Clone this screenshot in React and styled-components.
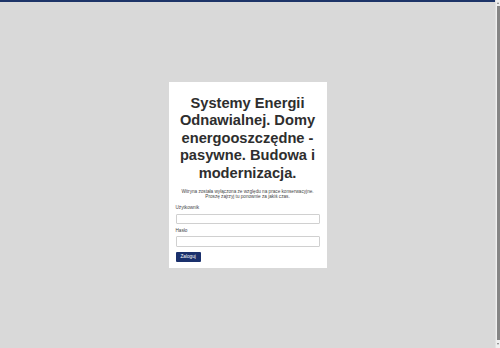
import React from "react";
import styled, { createGlobalStyle } from "styled-components";

const GlobalStyle = createGlobalStyle`
  html, body {
    overflow: hidden;
  }
  body {
    margin: 0;
    background: #d9d9d9;
    font-family: "Liberation Sans", Arial, sans-serif;
    color: #333;
  }
`;

const Page = styled.div`
  min-height: 100vh;
  box-sizing: border-box;
  border-top: 2px solid #1d3468;
  padding-right: 5px;
  display: flex;
  align-items: center;
  justify-content: center;
`;

const ScrollTrack = styled.div`
  position: fixed;
  top: 0;
  right: 0;
  width: 5px;
  height: 100vh;
  background: #efefef;
  border-left: 1px solid #e2e2e2;
  box-sizing: border-box;
`;

const ScrollThumb = styled.div`
  position: absolute;
  top: 6px;
  bottom: 8px;
  left: 0.5px;
  right: 0.5px;
  background: #858585;
`;

const ScrollArrow = styled.div`
  position: absolute;
  left: 1px;
  ${(p) => (p.$down ? "bottom: 3px;" : "top: 2px;")}
  width: 0;
  height: 0;
  border-left: 1.5px solid transparent;
  border-right: 1.5px solid transparent;
  ${(p) =>
    p.$down ? "border-top: 2px solid #7a7a7a;" : "border-bottom: 2px solid #7a7a7a;"}
`;

const Card = styled.section`
  width: 158px;
  box-sizing: border-box;
  background: #fff;
  padding: 13px 7px 6px;
`;

const Title = styled.h1`
  margin: 0;
  font-size: 14.67px;
  line-height: 1.2;
  font-weight: 700;
  text-align: center;
  color: #2e2e2e;
`;

const Notice = styled.p`
  margin: 6px 0 0;
  font-size: 4.67px;
  line-height: 1.25;
  text-align: center;
  color: #444;
`;

const Form = styled.form`
  display: flex;
  flex-direction: column;
  margin-top: 5px;
`;

const Label = styled.label`
  font-size: 4.67px;
  line-height: 1.2;
  color: #444;
  margin-top: ${(p) => (p.$first ? "0" : "3.5px")};
`;

const Input = styled.input`
  display: block;
  box-sizing: border-box;
  width: 100%;
  height: 10.5px;
  margin: 3px 0 0;
  padding: 0 2px;
  border: 1px solid #d0d0d0;
  border-radius: 1px;
  background: #fff;
  font-size: 4.67px;
  font-family: inherit;
`;

const Button = styled.button`
  align-self: flex-start;
  margin-top: 5.5px;
  height: 10px;
  padding: 0 5px;
  border: none;
  border-radius: 1px;
  background: #1a306c;
  color: #fff;
  font-size: 4.67px;
  font-family: inherit;
  line-height: 10px;
  cursor: pointer;
`;

export default function App() {
  return (
    <>
      <GlobalStyle />
      <Page>
        <Card>
          <Title>
            Systemy Energii Odnawialnej. Domy energooszczędne - pasywne. Budowa i modernizacja.
          </Title>
          <Notice>
            Witryna została wyłączona ze względu na prace konserwacyjne.
            <br />
            Proszę zajrzyj tu ponownie za jakiś czas.
          </Notice>
          <Form onSubmit={(e) => e.preventDefault()}>
            <Label $first htmlFor="username">Użytkownik</Label>
            <Input id="username" type="text" />
            <Label htmlFor="passwd">Hasło</Label>
            <Input id="passwd" type="password" />
            <Button type="submit">Zaloguj</Button>
          </Form>
        </Card>
      </Page>
      <ScrollTrack>
        <ScrollArrow />
        <ScrollThumb />
        <ScrollArrow $down />
      </ScrollTrack>
    </>
  );
}
